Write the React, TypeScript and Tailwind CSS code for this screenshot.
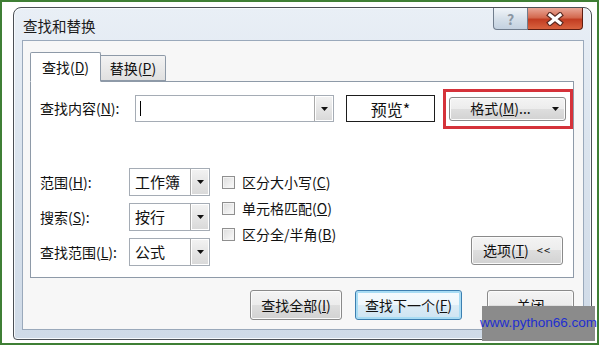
const cjk = "font-['Microsoft_YaHei','Noto_Sans_CJK_SC',sans-serif]"
const btnFace =
  'border border-[#8a8a8a] rounded-[3px] bg-[linear-gradient(#f4f4f4_0%,#ececec_50%,#dedede_50%,#d2d2d2_100%)] shadow-[inset_0_0_0_1px_#fbfbfb]'

function Arrow() {
  return (
    <svg width="7" height="4" viewBox="0 0 7 4">
      <path d="M0 0h7L3.5 4z" fill="#111" />
    </svg>
  )
}

function DropButton() {
  return (
    <div className="w-[19px] self-stretch flex items-center justify-center border-l border-[#a9a9a9] bg-[linear-gradient(#f3f3f3,#d8d8d8)] shadow-[inset_0_0_0_1px_#fff]">
      <Arrow />
    </div>
  )
}

function Combo({ value }: { value: string }) {
  return (
    <div className="flex w-[81px] h-[28px] border border-[#a5acb5] bg-white">
      <div className="flex-1 flex items-center pl-[5px] text-[15px] text-[#111]">{value}</div>
      <DropButton />
    </div>
  )
}

function Key({ label, k, tail = '' }: { label: string; k: string; tail?: string }) {
  return (
    <span>
      {label}(<u>{k}</u>){tail}
    </span>
  )
}

function CheckRow({ children }: { children: React.ReactNode }) {
  return (
    <div className="h-[26px] flex items-center gap-[7px]">
      <div className="w-[13px] h-[13px] border border-[#8f8f8f] bg-[linear-gradient(135deg,#dcdcdc,#fbfbfb)] shadow-[inset_0_0_0_1px_#f4f4f4]" />
      <span className="text-[14px] text-[#111]">{children}</span>
    </div>
  )
}

export default function App() {
  return (
    <div className={`relative w-[599px] h-[345px] bg-white border-2 border-[#3f7f35] ${cjk}`}>
      {/* window */}
      <div className="ml-[11px] mt-[5px] w-[579px] h-[333px] flex flex-col rounded-t-[8px] rounded-b-[4px] border border-[#4b4f55] bg-[linear-gradient(180deg,#e9eff6_0%,#dbe4ee_40%,#cfdae7_100%)] shadow-[inset_0_0_0_1px_#f6f9fc]">
        <div className="h-[32px] flex items-start pl-[9px] pr-[8px]">
          <span className="mt-[9px] text-[14.5px] leading-[17px] text-[#1a1a1a]">查找和替换</span>
          <div className="ml-auto flex">
            <div className="w-[35px] h-[22px] flex items-center justify-center border border-[#707d8d] border-t-0 rounded-bl-[4px] bg-[linear-gradient(#f1f5f9,#d6e0ea_50%,#c3d1e0)] text-[14px] font-bold text-[#8b96a3] leading-none">
              ?
            </div>
            <div className="w-[55px] h-[22px] flex items-center justify-center border border-[#5f1e12] border-t-0 border-l-0 rounded-br-[4px] bg-[linear-gradient(#e9a797,#d46a50_45%,#c23d22_55%,#d9633f)]">
              <svg width="20" height="14" viewBox="0 0 20 14">
                <path d="M5 3l10 8M15 3L5 11" stroke="#5a2a22" strokeWidth="5.5" strokeLinecap="square" />
                <path d="M5 3l10 8M15 3L5 11" stroke="#fff" strokeWidth="3.2" strokeLinecap="square" />
              </svg>
            </div>
          </div>
        </div>

        {/* client area */}
        <div className="ml-[8px] mr-[7px] h-[290px] border border-[#9aa9bb] bg-[#f7f7f7] pt-[11px] pl-[7px] pr-[9px] flex flex-col text-[#111]">
          <div className="flex items-end h-[29px] text-[14px]">
            <div className="w-[71px] h-[30px] -mb-px z-10 flex items-center justify-center border border-[#8e9aa8] border-b-white rounded-t-[2px] bg-white">
              <Key label="查找" k="D" />
            </div>
            <div className="w-[65px] h-[26px] flex items-center justify-center border border-l-0 border-[#8e9aa8] rounded-tr-[2px] bg-[linear-gradient(#f3f3f3,#e0e0e0)]">
              <Key label="替换" k="P" />
            </div>
          </div>

          <div className="h-[197px] border border-[#8e9aa8] bg-white flex flex-col">
            <div className="mt-[13px] h-[27px] flex items-center text-[14px]">
              <div className="w-[104px] pl-[9px]">
                <Key label="查找内容" k="N" tail=":" />
              </div>
              <div className="flex w-[199px] h-[27px] border border-[#a5acb5] bg-white">
                <div className="flex-1 flex items-center pl-[4px]">
                  <div className="w-px h-[15px] bg-black" />
                </div>
                <DropButton />
              </div>
              <div className="ml-[12px] w-[89px] h-[27px] flex items-center justify-center border border-[#1d1d1d] text-[16px]">
                预览*
              </div>
              <div className="ml-[8px] w-[130px] h-[40px] border-[3px] border-[#d5323a] flex items-center px-[3px]">
                <div className={`w-[117px] h-[24px] flex items-center ${btnFace} text-[14px]`}>
                  <span className="flex-1 text-center pl-[6px]">
                    <Key label="格式" k="M" tail="..." />
                  </span>
                  <span className="w-[20px] flex justify-center">
                    <Arrow />
                  </span>
                </div>
              </div>
            </div>

            <div className="mt-[46px] flex items-start pr-[10px] text-[14px]">
              <div className="grid grid-cols-[89px_81px] gap-y-[7px] pl-[9px] items-center">
                <Key label="范围" k="H" tail=":" />
                <Combo value="工作簿" />
                <Key label="搜索" k="S" tail=":" />
                <Combo value="按行" />
                <Key label="查找范围" k="L" tail=":" />
                <Combo value="公式" />
              </div>
              <div className="ml-[12px] mt-[1px] flex flex-col">
                <CheckRow>
                  <Key label="区分大小写" k="C" />
                </CheckRow>
                <CheckRow>
                  <Key label="单元格匹配" k="O" />
                </CheckRow>
                <CheckRow>
                  <Key label="区分全/半角" k="B" />
                </CheckRow>
              </div>
              <div className="ml-auto self-end mb-px">
                <div className={`w-[92px] h-[29px] flex items-center justify-center gap-[8px] ${btnFace}`}>
                  <Key label="选项" k="T" />
                  <span className="text-[11px] tracking-[1px]">&lt;&lt;</span>
                </div>
              </div>
            </div>
          </div>

          <div className="mt-[12px] flex justify-end text-[14px]">
            <div className={`w-[92px] h-[30px] flex items-center justify-center ${btnFace}`}>
              <Key label="查找全部" k="I" />
            </div>
            <div className="ml-[13px] w-[107px] h-[30px] flex items-center justify-center rounded-[3px] border border-[#3c7fb1] bg-[linear-gradient(#f6fbfe_0%,#eef6fb_50%,#dcecf6_50%,#cde4f2_100%)] shadow-[inset_0_0_0_2px_#a8dcf4]">
              <Key label="查找下一个" k="F" />
            </div>
            <div className={`ml-[25px] w-[87px] h-[30px] flex items-center justify-center ${btnFace}`}>
              关闭
            </div>
          </div>
        </div>
      </div>

      {/* watermark */}
      <div className="absolute left-[480px] top-[304px] w-[113px] h-[35px] bg-[#8b8b8b] flex items-center justify-center">
        <span className="font-['Liberation_Sans',sans-serif] text-[13.5px] text-[#1f2fd0]">www.python66.com</span>
      </div>
    </div>
  )
}
